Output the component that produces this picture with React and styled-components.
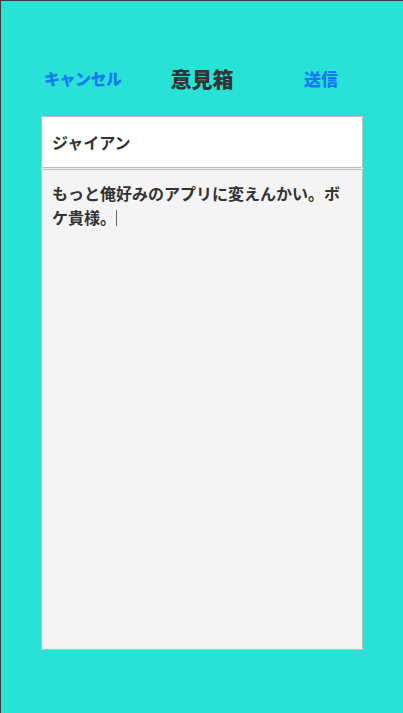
import React from "react";
import styled, { createGlobalStyle } from "styled-components";

const GlobalStyle = createGlobalStyle`
  html, body {
    margin: 0;
    padding: 0;
    background: #28e2d8;
  }
  body {
    font-family: "Noto Sans CJK JP", "Noto Sans", sans-serif;
  }
`;

const Screen = styled.div`
  box-sizing: border-box;
  width: 403px;
  height: 713px;
  background: #28e2d8;
  border-top: 1px solid #3c3c3c;
  border-left: 1px solid #3c3c3c;
  display: flex;
  flex-direction: column;
`;

const Header = styled.div`
  display: grid;
  grid-template-columns: 1fr auto 1fr;
  align-items: center;
  height: 36px;
  margin-top: 59px;
`;

const NavButton = styled.button`
  justify-self: ${(p) => (p.$side === "right" ? "end" : "start")};
  margin: ${(p) => (p.$side === "right" ? "0 65px 0 0" : "0 0 0 43px")};
  padding: 0;
  border: none;
  background: none;
  color: #1479f2;
  font-family: "Noto Sans CJK JP", sans-serif;
  font-weight: 900;
  font-size: ${(p) => p.$size}px;
  letter-spacing: ${(p) => (p.$side === "right" ? "0" : "-0.5px")};
  line-height: 1;
  cursor: pointer;
`;

const Title = styled.h1`
  margin: 0;
  color: #333333;
  font-family: "Noto Sans CJK JP", sans-serif;
  font-weight: 900;
  font-size: 21px;
  line-height: 1;
`;

const Form = styled.div`
  display: flex;
  flex-direction: column;
  gap: 1px;
  margin: 20px 40px 0;
  background: #eeeeee;
`;

const NameInput = styled.input`
  box-sizing: border-box;
  width: 100%;
  height: 52px;
  margin: 0;
  padding: 0 10px;
  border: 1px solid #bdbdbd;
  border-radius: 1px;
  background: #ffffff;
  color: #333333;
  font-family: "Noto Sans CJK JP", sans-serif;
  font-weight: 700;
  font-size: 16px;
  outline: none;
`;

const Body = styled.div`
  box-sizing: border-box;
  height: 481px;
  padding: 11px 10px;
  border: 1px solid #bdbdbd;
  border-radius: 1px;
  background: #f4f4f4;
  color: #333333;
  font-weight: 700;
  font-size: 16px;
  line-height: 24px;
  word-break: break-all;
`;

const Caret = styled.span`
  display: inline-block;
  width: 1px;
  height: 16px;
  margin-left: 0;
  vertical-align: -2px;
  background: #666666;
`;

export default function App() {
  return (
    <>
      <GlobalStyle />
      <Screen>
        <Header>
          <NavButton $side="left" $size={16}>キャンセル</NavButton>
          <Title>意見箱</Title>
          <NavButton $side="right" $size={17}>送信</NavButton>
        </Header>
        <Form>
          <NameInput defaultValue="ジャイアン" readOnly />
          <Body>
            もっと俺好みのアプリに変えんかい。ボケ貴様。
            <Caret />
          </Body>
        </Form>
      </Screen>
    </>
  );
}
